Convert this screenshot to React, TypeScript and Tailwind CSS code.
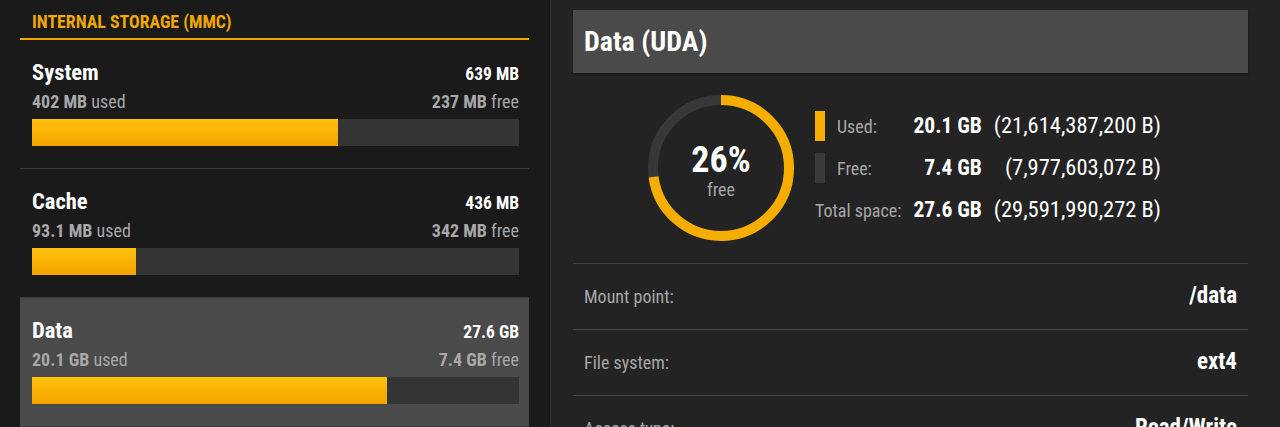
import React from "react";

const font = {
  fontFamily:
    '"Roboto Condensed", "Liberation Sans Narrow", "DejaVu Sans Condensed", Roboto, sans-serif',
};

interface partitionProps {
  name: string;
  total: string;
  used: [string, string];
  free: [string, string];
  percent: number;
  selected?: boolean;
}

const partitions: partitionProps[] = [
  { name: "System", total: "639 MB", used: ["402 MB", "used"], free: ["237 MB", "free"], percent: 62.9 },
  { name: "Cache", total: "436 MB", used: ["93.1 MB", "used"], free: ["342 MB", "free"], percent: 21.3 },
  { name: "Data", total: "27.6 GB", used: ["20.1 GB", "used"], free: ["7.4 GB", "free"], percent: 72.8, selected: true },
];

function Partition({ p }: { p: partitionProps }) {
  return (
    <div
      className={
        "pt-[19px] pb-[22px] pl-3 pr-[10px] border-b border-[#3a3a3a] " +
        (p.selected ? "bg-[#4a4a4a]" : "")
      }
    >
      <div className="flex justify-between items-baseline leading-[26px]">
        <span className="text-[22.5px] font-bold text-white">{p.name}</span>
        <span className="text-[17.5px] font-bold text-white">{p.total}</span>
      </div>
      <div className="flex justify-between items-baseline leading-[26px] mt-[2px] text-[18px] text-[#a8a8a8]">
        <span>
          <b className="font-bold">{p.used[0]}</b> {p.used[1]}
        </span>
        <span>
          <b className="font-bold">{p.free[0]}</b> {p.free[1]}
        </span>
      </div>
      <div className="mt-[4px] h-[27px] bg-[#353535]">
        <div
          className="h-full bg-gradient-to-b from-[#ffc20e] to-[#f5a200]"
          style={{ width: `${p.percent}%` }}
        />
      </div>
    </div>
  );
}

function Donut() {
  const r = 68;
  const c = 2 * Math.PI * r;
  const used = 0.728;
  return (
    <div className="relative w-[146px] h-[146px]">
      <svg width="146" height="146" viewBox="0 0 146 146" className="-rotate-90">
        <circle cx="73" cy="73" r={r} fill="none" stroke="#383838" strokeWidth="10" />
        <circle
          cx="73"
          cy="73"
          r={r}
          fill="none"
          stroke="#f5ad00"
          strokeWidth="10"
          strokeDasharray={`${c * used} ${c}`}
        />
      </svg>
      <div className="absolute inset-0 flex flex-col items-center justify-center pt-[7px]">
        <span className="text-[36px] font-bold text-white leading-[36px]">26%</span>
        <span className="mt-[1px] text-[18px] text-[#a8a8a8] leading-[22px]">free</span>
      </div>
    </div>
  );
}

const details = [
  { label: "Mount point:", value: "/data" },
  { label: "File system:", value: "ext4" },
  { label: "Access type:", value: "Read/Write" },
  { label: "Block size:", value: "4096 B" },
];

export default function App() {
  return (
    <div className="flex h-[427px] w-[1280px] overflow-hidden bg-[#232323]" style={font}>
      <div className="w-[551px] shrink-0 bg-[#1a1a1a] border-r border-[#2e2e2e] pl-5 pr-[21px] pt-[10px]">
        <div className="pl-3 pb-[4px] leading-[24px] text-[17.8px] font-bold text-[#f0a800] border-b-2 border-[#f0a800]">
          INTERNAL STORAGE (MMC)
        </div>
        {partitions.map((p) => (
          <Partition key={p.name} p={p} />
        ))}
      </div>

      <div className="flex-1 pl-[22px] pr-[32px] pt-[10px]">
        <div className="h-[63px] bg-[#4a4a4a] px-[11px] flex items-center text-[28px] font-bold text-white shadow-[0_2px_2px_rgba(0,0,0,0.3)]">
          Data (UDA)
        </div>

        <div className="h-[190px] flex items-center pl-[75px]">
          <Donut />
          <div className="ml-[21px] grid grid-cols-[auto_auto_auto] gap-x-[12px] text-white">
            <div className="h-[42px] flex items-center">
              <span className="w-[10px] h-[30px] bg-[#f5ad00]" />
              <span className="ml-3 text-[18px] text-[#a8a8a8]">Used:</span>
            </div>
            <div className="h-[42px] flex items-center justify-end text-[21.5px] font-bold">20.1 GB</div>
            <div className="h-[42px] flex items-center justify-end text-[22.5px]">(21,614,387,200 B)</div>

            <div className="h-[42px] flex items-center">
              <span className="w-[10px] h-[30px] bg-[#3a3a3a]" />
              <span className="ml-3 text-[18px] text-[#a8a8a8]">Free:</span>
            </div>
            <div className="h-[42px] flex items-center justify-end text-[21.5px] font-bold">7.4 GB</div>
            <div className="h-[42px] flex items-center justify-end text-[22.5px]">(7,977,603,072 B)</div>

            <div className="h-[42px] flex items-center text-[18px] text-[#a8a8a8]">Total space:</div>
            <div className="h-[42px] flex items-center justify-end text-[21.5px] font-bold">27.6 GB</div>
            <div className="h-[42px] flex items-center justify-end text-[22.5px]">(29,591,990,272 B)</div>
          </div>
        </div>

        {details.map((d) => (
          <div
            key={d.label}
            className="h-[66px] border-t border-[#444] flex items-center justify-between px-[11px]"
          >
            <span className="text-[18px] text-[#a8a8a8]">{d.label}</span>
            <span className="text-[23px] font-bold text-white">{d.value}</span>
          </div>
        ))}
      </div>
    </div>
  );
}
